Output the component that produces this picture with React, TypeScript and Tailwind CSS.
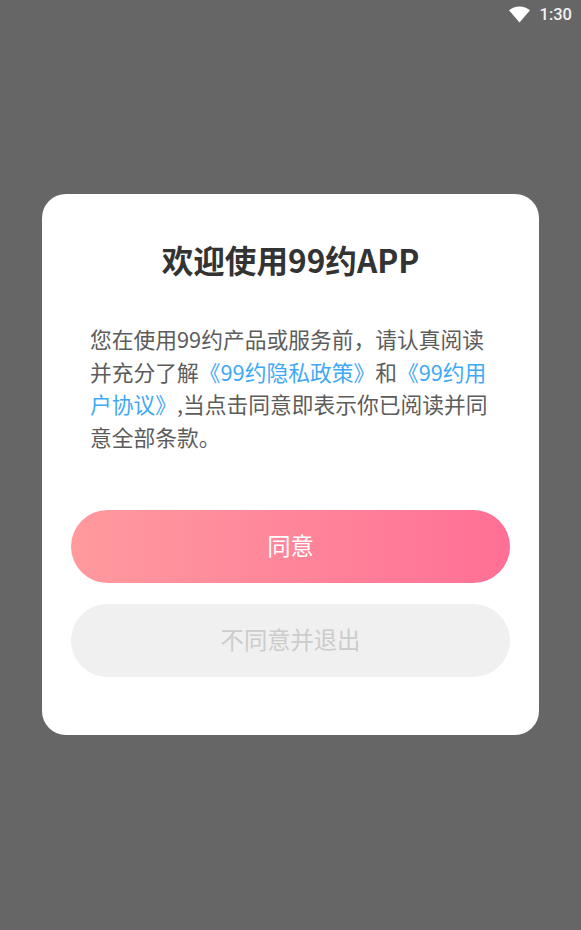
export default function App() {
  return (
    <main className="flex h-[930px] w-[581px] flex-col bg-[#666666] font-['Noto_Sans_CJK_SC',sans-serif]">
      <header className="flex h-[30px] items-center justify-end gap-[9px] pr-[9px]">
        <svg width="23" height="17" viewBox="0 0 22 17" className="mt-[-2px]">
          <path d="M0.5 4.2C3.4 1.8 7 0.4 11 0.4s7.6 1.4 10.5 3.8L11 16.6z" fill="#ffffff" />
        </svg>
        <span className="font-['Roboto',sans-serif] text-[16.5px] leading-none font-medium text-[#f2f2f2]">1:30</span>
      </header>

      <section className="mx-[42px] mt-[164px] h-[541px] rounded-[24px] bg-white px-[29px]">
        <h1 className="mt-[41px] text-center text-[31.6px] leading-[48px] font-bold text-[#333333]">欢迎使用99约APP</h1>
        <p className="mx-[19px] mt-[40px] text-[21.75px] leading-[32.5px] whitespace-nowrap text-[#5c5c5c]">
          您在使用99约产品或服务前，请认真阅读
          <br />
          并充分了解<span className="text-[#3fa9f5]">《99约隐私政策》</span>和<span className="text-[#3fa9f5]">《99约用</span>
          <br />
          <span className="text-[#3fa9f5]">户协议》</span>,当点击同意即表示你已阅读并同
          <br />
          意全部条款。
        </p>
        <div className="mt-[57px] flex flex-col gap-[21px]">
          <button className="h-[73px] rounded-full bg-gradient-to-r from-[#ff9a9e] to-[#ff6f96] pb-[2px] text-[23.3px] text-white">同意</button>
          <button className="h-[73px] rounded-full bg-[#f0f0f0] pb-[2px] text-[23.3px] text-[#cccccc]">不同意并退出</button>
        </div>
      </section>
    </main>
  );
}
